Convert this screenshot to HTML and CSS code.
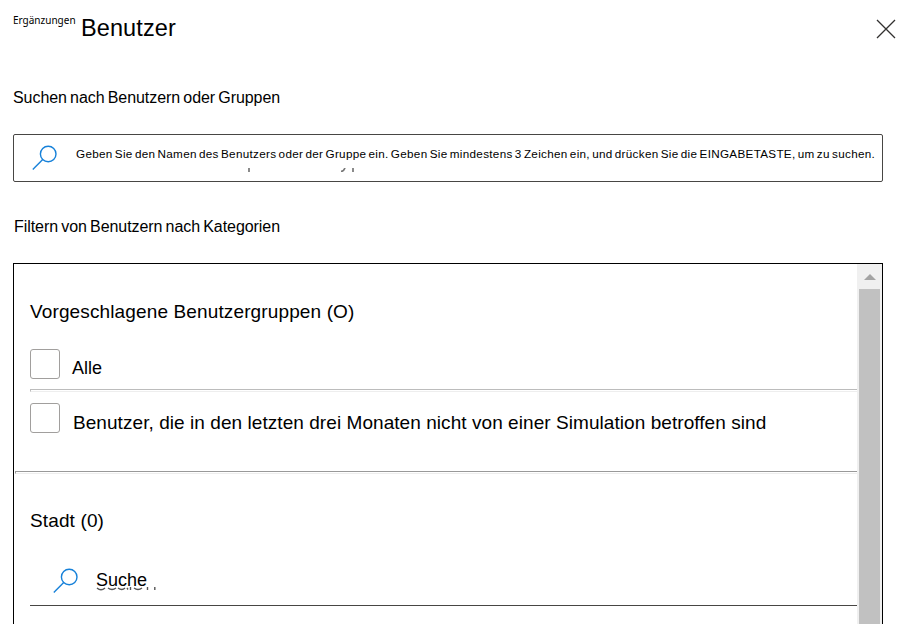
FILE: index.html
```html
<!DOCTYPE html>
<html lang="de">
<head>
<meta charset="utf-8">
<title>Benutzer</title>
<link rel="stylesheet" href="styles.css">
</head>
<body>
<main class="panel">
  <header class="header">
    <span class="eyebrow">Ergänzungen</span>
    <h1 class="title">Benutzer</h1>
    <svg class="close" width="20" height="20" viewBox="0 0 20 20"><path d="M1 1L19 19M19 1L1 19"/></svg>
  </header>
  <h2 class="label label-search">Suchen nach Benutzern oder Gruppen</h2>
  <div class="searchbox">
    <svg class="lens" width="26" height="26" viewBox="0 0 26 26"><circle cx="16.2" cy="9" r="7.8"/><path d="M10.7 14.5L.8 24.4"/></svg>
    <span class="hint">Geben Sie den Namen des Benutzers oder der Gruppe ein. Geben Sie mindestens 3 Zeichen ein, und drücken Sie die EINGABETASTE, um zu suchen.</span>
    <svg class="marks" width="106" height="4" viewBox="0 0 106 4"><path d="M1 0V4M105 0V4M93 3.4Q95.5 3.5 97 0"/></svg>
  </div>
  <h2 class="label label-filter">Filtern von Benutzern nach Kategorien</h2>
  <section class="list">
    <div class="content">
      <h3 class="group group-first">Vorgeschlagene Benutzergruppen (O)</h3>
      <div class="row row-all"><span class="box"></span><span class="name name-all">Alle</span></div>
      <div class="rule rule-inner"></div>
      <div class="row row-users"><span class="box"></span><span class="name name-users">Benutzer, die in den letzten drei Monaten nicht von einer Simulation betroffen sind</span></div>
      <div class="rule rule-full"></div>
      <h3 class="group group-city">Stadt (0)</h3>
      <div class="cityfield">
        <svg class="lens" width="26" height="26" viewBox="0 0 26 26"><circle cx="16.2" cy="9" r="7.8"/><path d="M10.7 14.5L.8 24.4"/></svg>
        <span class="find">Suche</span>
        <svg class="dashes" width="62" height="4" viewBox="0 0 62 4"><path d="M1 1Q5 4.5 9 1M12 1Q16 4 20 1M22 1Q26 4 29 1M31 1L32 2.5M34.5 0V3M38 1Q42 4 46 1M51.5 0V3M58.8 0V3"/></svg>
      </div>
    </div>
    <div class="scrollbar">
      <svg class="arrow" width="12" height="6" viewBox="0 0 12 6"><path d="M0 6L6 0L12 6Z"/></svg>
      <div class="thumb"></div>
    </div>
  </section>
</main>
</body>
</html>
```
FILE: styles.css
```css
* { box-sizing: border-box; }
body { margin: 0; background: #fff; color: #000; font-family: "Liberation Sans", Arial, sans-serif; overflow: hidden; }
h1, h2, h3 { margin: 0; font-weight: normal; white-space: nowrap; }
span { white-space: nowrap; }
.panel { height: 624px; padding: 0 24px 0 13px; display: flex; flex-direction: column; overflow: hidden; }
.header { display: flex; align-items: flex-start; height: 88px; flex: none; margin-right: -13px; }
.eyebrow { width: 68px; padding-top: 13px; font: 10px/14px "Noto Sans", sans-serif; }
.title { padding-top: 14px; font-size: 23.5px; line-height: 28px; letter-spacing: .1px; }
.close { margin: 19px 0 0 auto; fill: none; stroke: #323130; stroke-width: 1.3; }
.label { font-size: 16px; line-height: 20px; letter-spacing: -.06px; word-spacing: -1.2px; flex: none; }
.label-search { height: 46px; }
.searchbox { position: relative; height: 48px; flex: none; border: 1px solid #484644; border-radius: 2px; display: flex; }
.lens { flex: none; fill: none; stroke: #1681d9; stroke-width: 1.4; }
.searchbox .lens { margin: 10px 0 0 18px; }
.hint { margin: 11px 0 0 18px; font-size: 11.7px; line-height: 16px; letter-spacing: .303px; word-spacing: -1.3px; }
.marks { position: absolute; left: 234px; top: 33px; fill: none; stroke: #777; stroke-width: 1.7; }
.label-filter { padding: 35px 0 0 1px; height: 81px; }
.list { flex: 1; min-height: 0; display: flex; border: 1px solid #000; border-bottom: 0; }
.content { flex: 1; min-width: 0; }
.group { padding-left: 16px; font-size: 19px; line-height: 24px; letter-spacing: .13px; }
.group-first { padding-top: 36px; height: 85px; }
.row { display: flex; padding-left: 16px; }
.row-all { height: 40px; }
.row-users { height: 68px; padding-top: 11px; }
.box { width: 30px; height: 30px; flex: none; border: 1px solid #a19f9d; border-radius: 3px; }
.name { line-height: 24px; }
.name-all { padding: 7px 0 0 12px; font-size: 18px; }
.name-users { padding: 8px 0 0 13px; font-size: 19px; letter-spacing: .06px; }
.rule { height: 3px; border-bottom: 1px solid #eee; }
.rule-inner { margin-left: 16px; border-top: 1px solid #bcbcbc; border-left: 1px solid #bcbcbc; }
.rule-full { margin: 11px 0 0 1px; border-top: 1px solid #999; border-left: 1px solid #999; }
.group-city { padding-top: 35px; height: 82px; }
.cityfield { position: relative; display: flex; height: 50px; margin-left: 16px; padding: 12px 0 0 23px; border-bottom: 1px solid #484644; }
.cityfield .find { margin: 0 0 0 17px; font-size: 18px; line-height: 24px; }
.dashes { position: absolute; left: 66px; top: 31px; fill: none; stroke: #555; stroke-width: 1.4; }
.scrollbar { width: 25px; padding: 10px 2px 0; background: #f0f0f0; display: flex; flex-direction: column; align-items: center; }
.arrow { flex: none; fill: #a3a3a3; }
.thumb { width: 21px; flex: 1; margin-top: 9px; background: #c1c1c1; }
```
